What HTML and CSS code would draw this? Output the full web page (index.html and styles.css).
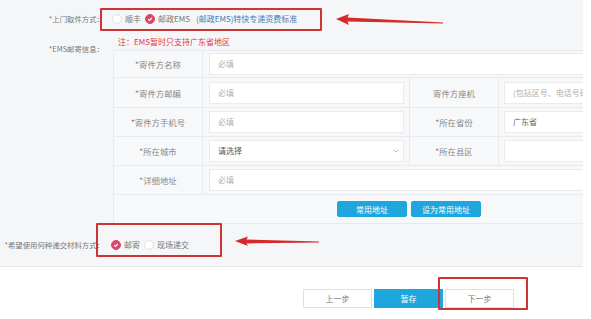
FILE: index.html
```html
<!DOCTYPE html>
<html lang="zh-CN">
<head>
    <meta charset="UTF-8">
    <title>EMS邮寄信息</title>
    <link rel="stylesheet" href="styles.css">
</head>
<body>
    <div class="page">
        <div class="form">
            <!-- 上门取件方式 -->
            <div class="field field-pickup">
                <div class="field-label">*上门取件方式：</div>
                <div class="radios">
                    <span class="radio"></span><span class="radio-text">顺丰</span>
                    <span class="radio checked"><svg viewBox="0 0 10 10"><path d="M2.8 5.1 L4.4 6.7 L7.3 3.5"/></svg></span><span class="radio-text">邮政EMS</span>
                    <a class="link" href="#">(邮政EMS)特快专递资费标准</a>
                </div>
            </div>

            <!-- EMS邮寄信息 -->
            <div class="field field-ems">
                <div class="field-label label-top">*EMS邮寄信息：</div>
                <div class="ems-body">
                    <div class="note">注：EMS暂时只支持广东省地区</div>
                    <div class="addr-table">
                        <div class="cell cell-label">*寄件方名称</div>
                        <div class="cell cell-input span-3"><div class="input placeholder">必填</div></div>

                        <div class="cell cell-label">*寄件方邮编</div>
                        <div class="cell cell-input"><div class="input placeholder">必填</div></div>
                        <div class="cell cell-label">寄件方座机</div>
                        <div class="cell cell-input cell-last"><div class="input placeholder">(包括区号、电话号码)</div></div>

                        <div class="cell cell-label"><span class="star-red">*</span>寄件方手机号</div>
                        <div class="cell cell-input"><div class="input placeholder">必填</div></div>
                        <div class="cell cell-label">*所在省份</div>
                        <div class="cell cell-input cell-last"><div class="input">广东省</div></div>

                        <div class="cell cell-label">*所在城市</div>
                        <div class="cell cell-input">
                            <div class="input select">请选择
                                <svg class="chevron" viewBox="0 0 8 5"><path d="M1 1 L4 4 L7 1"/></svg>
                            </div>
                        </div>
                        <div class="cell cell-label">*所在县区</div>
                        <div class="cell cell-input cell-last"><div class="input"></div></div>

                        <div class="cell cell-label">*详细地址</div>
                        <div class="cell cell-input span-3"><div class="input placeholder">必填</div></div>

                        <div class="cell cell-actions">
                            <button class="btn btn-blue btn-small">常用地址</button>
                            <button class="btn btn-blue btn-small">设为常用地址</button>
                        </div>
                    </div>
                </div>
            </div>

            <!-- 递交材料方式 -->
            <div class="field field-submit">
                <div class="field-label">*希望使用何种递交材料方式：</div>
                <div class="radios radios-submit">
                    <span class="radio checked"><svg viewBox="0 0 10 10"><path d="M2.8 5.1 L4.4 6.7 L7.3 3.5"/></svg></span><span class="radio-text">邮寄</span>
                    <span class="radio"></span><span class="radio-text">现场递交</span>
                </div>
            </div>
        </div>

        <div class="steps">
            <button class="btn btn-step">上一步</button>
            <button class="btn btn-step btn-blue">暂存</button>
            <button class="btn btn-step">下一步</button>
        </div>

        <!-- 标注 -->
        <div class="mark mark-pickup"></div>
        <div class="mark mark-submit"></div>
        <div class="mark mark-next"></div>
        <svg class="arrows" viewBox="0 0 591 319">
            <polygon points="336,19 349,14 347.5,17.6 443,22.4 443,23.6 347.5,21.6 349,25"/>
            <polygon points="235,241 248,236.5 246.5,239.6 319,241.6 319,242.6 246.5,243.4 248,246"/>
        </svg>
    </div>
</body>
</html>
```

FILE: styles.css
```css
body {
    margin: 0;
    background: #fff;
    font-family: "Noto Sans CJK SC", "Noto Sans", sans-serif;
    font-size: 8px;
    color: #777;
}
.page {
    position: relative;
    width: 591px;
    height: 319px;
    overflow: hidden;
}
.form {
    width: 583px;
    overflow: hidden;
    background: #f5f6f8;
    border-bottom: 1px solid #e4e6e9;
}
.field { display: flex; }
.field-label {
    width: 104px;
    flex-shrink: 0;
    text-align: right;
    font-size: 7.4px;
    line-height: 10px;
    color: #777;
    white-space: nowrap;
}
.field-pickup { height: 37px; align-items: center; }
.field-submit { height: 42px; align-items: center; }
.label-top { padding-top: 7px; }

/* radios */
.radios { display: flex; align-items: center; margin-left: 8px; line-height: 10px; }
.radios-submit { margin-left: 7px; }
.radio {
    width: 10px;
    height: 10px;
    box-sizing: border-box;
    border: 1px solid #e0e0e0;
    border-radius: 50%;
    background: #fff;
    flex-shrink: 0;
}
.radio.checked { background: #d8486e; border-color: #d8486e; }
.radio svg { display: block; width: 8px; height: 8px; fill: none; stroke: #fff; stroke-width: 1.5; }
.radio-text { margin: 0 4px 0 3px; color: #777; }
.link { margin-left: 2px; color: #4a78b4; text-decoration: none; }

/* EMS */
.ems-body { margin-left: 9px; }
.note {
    height: 10px;
    line-height: 10px;
    margin-bottom: 3px;
    padding-left: 5px;
    color: #e3393e;
    font-size: 8px;
}
.addr-table {
    display: grid;
    grid-template-columns: 89px 207px 89px 100px;
    grid-template-rows: 27px 30px 29px 29px 29px 29px;
    border-top: 1px solid #e8eaed;
    border-left: 1px solid #e8eaed;
    background: #f7f8fa;
}
.cell {
    box-sizing: border-box;
    border-right: 1px solid #e8eaed;
    border-bottom: 1px solid #e8eaed;
    display: flex;
    align-items: center;
}
.cell-label { justify-content: center; font-size: 8.4px; color: #888; }
.star-red { color: #d0506a; }
.cell-input { padding: 0 5px 0 6px; }
.cell-last { padding-left: 5px; }
.span-3 { grid-column: 2 / 5; }
.input {
    position: relative;
    box-sizing: border-box;
    width: 100%;
    height: 22px;
    line-height: 20px;
    padding-left: 8px;
    background: #fff;
    border: 1px solid #ebebeb;
    color: #666;
    white-space: nowrap;
    overflow: hidden;
}
.placeholder { color: #b0b0b0; }
.select { color: #555; }
.chevron {
    position: absolute;
    right: 4px;
    top: 8px;
    width: 6px;
    height: 4px;
    fill: none;
    stroke: #999;
    stroke-width: 1;
}
.cell-actions { grid-column: 1 / 5; padding-left: 223px; gap: 4px; }

/* buttons */
.btn {
    box-sizing: border-box;
    margin: 0;
    padding: 0;
    font-family: inherit;
    font-size: 8px;
    color: #777;
    background: #fff;
    border: 1px solid #e0e0e0;
    cursor: pointer;
}
.btn-blue { background: #1ea7dc; border-color: #1ea7dc; color: #fff; }
.btn-small { width: 70px; height: 16px; border-radius: 2px; }
.steps {
    display: flex;
    gap: 2px;
    margin-top: 22px;
    padding-left: 303px;
}
.btn-step { width: 69px; height: 19px; }

/* annotations */
.mark {
    position: absolute;
    box-sizing: border-box;
    border: 2px solid #cf3434;
    border-radius: 1px;
}
.mark-pickup { left: 100px; top: 8px; width: 222px; height: 23px; }
.mark-submit { left: 96px; top: 223px; width: 126px; height: 34px; }
.mark-next { left: 438px; top: 277px; width: 90px; height: 33px; }
.arrows {
    position: absolute;
    left: 0;
    top: 0;
    width: 591px;
    height: 319px;
    fill: #d42a2a;
    pointer-events: none;
}
```
